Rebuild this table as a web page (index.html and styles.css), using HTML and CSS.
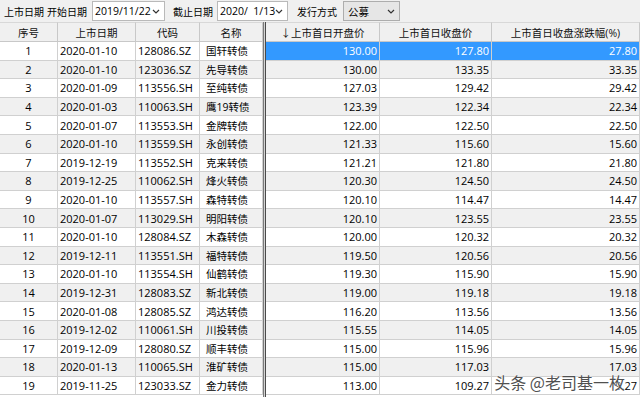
FILE: index.html
```html
<!DOCTYPE html>
<html>
<head>
<meta charset="utf-8">
<link rel="stylesheet" href="styles.css">
</head>
<body>
<div class="toolbar">
  <span class="lbl">上市日期</span>
  <span class="lbl">开始日期</span>
  <div class="combo w1"><span>2019/11/22</span><svg class="chev" width="8" height="5" viewBox="0 0 8 5"><path d="M1 1 L4 4 L7 1" fill="none" stroke="#333" stroke-width="1.2"/></svg></div>
  <span class="lbl gap">截止日期</span>
  <div class="combo w2"><span>2020/&nbsp; 1/13</span><svg class="chev" width="8" height="5" viewBox="0 0 8 5"><path d="M1 1 L4 4 L7 1" fill="none" stroke="#333" stroke-width="1.2"/></svg></div>
  <span class="lbl gap2">发行方式</span>
  <div class="combo w3 gray"><span class="cj">公募</span><svg class="chev" width="8" height="5" viewBox="0 0 8 5"><path d="M1 1 L4 4 L7 1" fill="none" stroke="#333" stroke-width="1.2"/></svg></div>
</div>
<div class="table">
  <div class="sep"></div>
  <div class="h">序号</div><div class="h">上市日期</div><div class="h">代码</div><div class="h">名称</div><div class="h">↓上市首日开盘价</div><div class="h">上市首日收盘价</div><div class="h">上市首日收盘涨跌幅(%)</div>

  <div class="c n">1</div><div class="c">2020-01-10</div><div class="c">128086.SZ</div><div class="c k">国轩转债</div><div class="c r sel">130.00</div><div class="c r sel">127.80</div><div class="c r sel">27.80</div>
  <div class="c n e">2</div><div class="c e">2020-01-10</div><div class="c e">123036.SZ</div><div class="c k e">先导转债</div><div class="c r e">130.00</div><div class="c r e">133.35</div><div class="c r e">33.35</div>
  <div class="c n">3</div><div class="c">2020-01-09</div><div class="c">113556.SH</div><div class="c k">至纯转债</div><div class="c r">127.03</div><div class="c r">129.42</div><div class="c r">29.42</div>
  <div class="c n e">4</div><div class="c e">2020-01-03</div><div class="c e">110063.SH</div><div class="c k e">鹰19转债</div><div class="c r e">123.39</div><div class="c r e">122.34</div><div class="c r e">22.34</div>
  <div class="c n">5</div><div class="c">2020-01-07</div><div class="c">113553.SH</div><div class="c k">金牌转债</div><div class="c r">122.00</div><div class="c r">122.50</div><div class="c r">22.50</div>
  <div class="c n e">6</div><div class="c e">2020-01-10</div><div class="c e">113559.SH</div><div class="c k e">永创转债</div><div class="c r e">121.33</div><div class="c r e">115.60</div><div class="c r e">15.60</div>
  <div class="c n">7</div><div class="c">2019-12-19</div><div class="c">113552.SH</div><div class="c k">克来转债</div><div class="c r">121.21</div><div class="c r">121.80</div><div class="c r">21.80</div>
  <div class="c n e">8</div><div class="c e">2019-12-25</div><div class="c e">110062.SH</div><div class="c k e">烽火转债</div><div class="c r e">120.30</div><div class="c r e">124.50</div><div class="c r e">24.50</div>
  <div class="c n">9</div><div class="c">2020-01-10</div><div class="c">113557.SH</div><div class="c k">森特转债</div><div class="c r">120.10</div><div class="c r">114.47</div><div class="c r">14.47</div>
  <div class="c n e">10</div><div class="c e">2020-01-07</div><div class="c e">113029.SH</div><div class="c k e">明阳转债</div><div class="c r e">120.10</div><div class="c r e">123.55</div><div class="c r e">23.55</div>
  <div class="c n">11</div><div class="c">2020-01-10</div><div class="c">128084.SZ</div><div class="c k">木森转债</div><div class="c r">120.00</div><div class="c r">120.32</div><div class="c r">20.32</div>
  <div class="c n e">12</div><div class="c e">2019-12-11</div><div class="c e">113551.SH</div><div class="c k e">福特转债</div><div class="c r e">119.50</div><div class="c r e">120.56</div><div class="c r e">20.56</div>
  <div class="c n">13</div><div class="c">2020-01-10</div><div class="c">113554.SH</div><div class="c k">仙鹤转债</div><div class="c r">119.30</div><div class="c r">115.90</div><div class="c r">15.90</div>
  <div class="c n e">14</div><div class="c e">2019-12-31</div><div class="c e">128083.SZ</div><div class="c k e">新北转债</div><div class="c r e">119.00</div><div class="c r e">119.18</div><div class="c r e">19.18</div>
  <div class="c n">15</div><div class="c">2020-01-08</div><div class="c">128085.SZ</div><div class="c k">鸿达转债</div><div class="c r">116.20</div><div class="c r">113.56</div><div class="c r">13.56</div>
  <div class="c n e">16</div><div class="c e">2019-12-02</div><div class="c e">110061.SH</div><div class="c k e">川投转债</div><div class="c r e">115.55</div><div class="c r e">114.05</div><div class="c r e">14.05</div>
  <div class="c n">17</div><div class="c">2019-12-09</div><div class="c">128080.SZ</div><div class="c k">顺丰转债</div><div class="c r">115.00</div><div class="c r">115.96</div><div class="c r">15.96</div>
  <div class="c n e">18</div><div class="c e">2020-01-13</div><div class="c e">110065.SH</div><div class="c k e">淮矿转债</div><div class="c r e">115.00</div><div class="c r e">117.03</div><div class="c r e">17.03</div>
  <div class="c n">19</div><div class="c">2019-11-25</div><div class="c">123033.SZ</div><div class="c k">金力转债</div><div class="c r">113.00</div><div class="c r">109.27</div><div class="c r">9.27</div>
</div>
<div class="wm">头条 @老司基一枚</div>
</body>
</html>
```
FILE: styles.css
```css
html, body {
  margin: 0;
  padding: 0;
}
body {
  width: 640px;
  height: 397px;
  overflow: hidden;
  background: #f0f0f0;
  font-family: "Open Sans", "Noto Sans CJK SC", sans-serif;
  font-size: 10.5px;
  color: #000;
  position: relative;
}
.toolbar {
  height: 22px;
  display: flex;
  align-items: center;
  padding-left: 4px;
  box-sizing: border-box;
}
.lbl {
  font-size: 10px;
  width: 40px;
  margin-right: 3px;
  white-space: nowrap;
  flex: none;
}
.lbl + .lbl {
  margin-right: 5px;
}
.lbl.gap {
  margin-left: 8px;
  margin-right: 4px;
}
.lbl.gap2 {
  margin-left: 9px;
  margin-right: 6px;
}
.combo {
  flex: none;
  height: 20px;
  box-sizing: border-box;
  border: 1px solid #b9b9b9;
  background: #fff;
  display: flex;
  align-items: center;
  justify-content: space-between;
  padding: 0 4px 0 2px;
  font-size: 10.5px;
  white-space: nowrap;
}
.combo .cj {
  font-size: 10.5px;
}
.combo.gray {
  background: #e6e6e6;
  border-color: #adadad;
  padding-left: 4px;
}
.w1 { width: 73px; }
.w2 { width: 71px; }
.w3 { width: 57px; }
.chev { flex: none; }
.table {
  display: grid;
  grid-template-columns: 58px 78px 64px 63px 3px 114px 112px 148px;
  grid-template-rows: 20px;
  grid-auto-rows: 18.6px;
  background: #fff;
}
.sep {
  grid-column: 5;
  grid-row: 1 / span 21;
  background: linear-gradient(to right, #7a7a7a 0, #7a7a7a 1px, #d4d4d4 1px, #d4d4d4 2px, #4a4a4a 2px);
}
.h {
  background: #f0f0f0;
  border-right: 1px solid #c8c8c8;
  border-bottom: 1px solid #c8c8c8;
  border-top: 1px solid #d8d8d8;
  display: flex;
  align-items: center;
  justify-content: center;
  white-space: nowrap;
  color: #111;
  overflow: hidden;
  font-size: 10.5px;
}
.c {
  border-right: 1px solid #d0d0d0;
  border-bottom: 1px solid #d0d0d0;
  display: flex;
  align-items: center;
  padding: 0 2px;
  white-space: nowrap;
  overflow: hidden;
  color: #000;
  background: #fff;
  font-size: 11px;
}
.c.k {
  font-size: 10.5px;
  padding-left: 6px;
}
.c.e {
  background: #f0f0f0;
}
.c.n {
  justify-content: center;
  padding: 0;
}
.c.r {
  justify-content: flex-end;
  padding: 0 2px;
}
.c.sel {
  background: #3399ff;
  color: #fff;
}
.wm {
  position: absolute;
  right: 15px;
  bottom: 3px;
  font-family: "Noto Sans CJK SC", sans-serif;
  font-size: 16px;
  color: #505050;
  text-shadow: 0 0 2px #fff, 0 0 1px #fff;
}
```
